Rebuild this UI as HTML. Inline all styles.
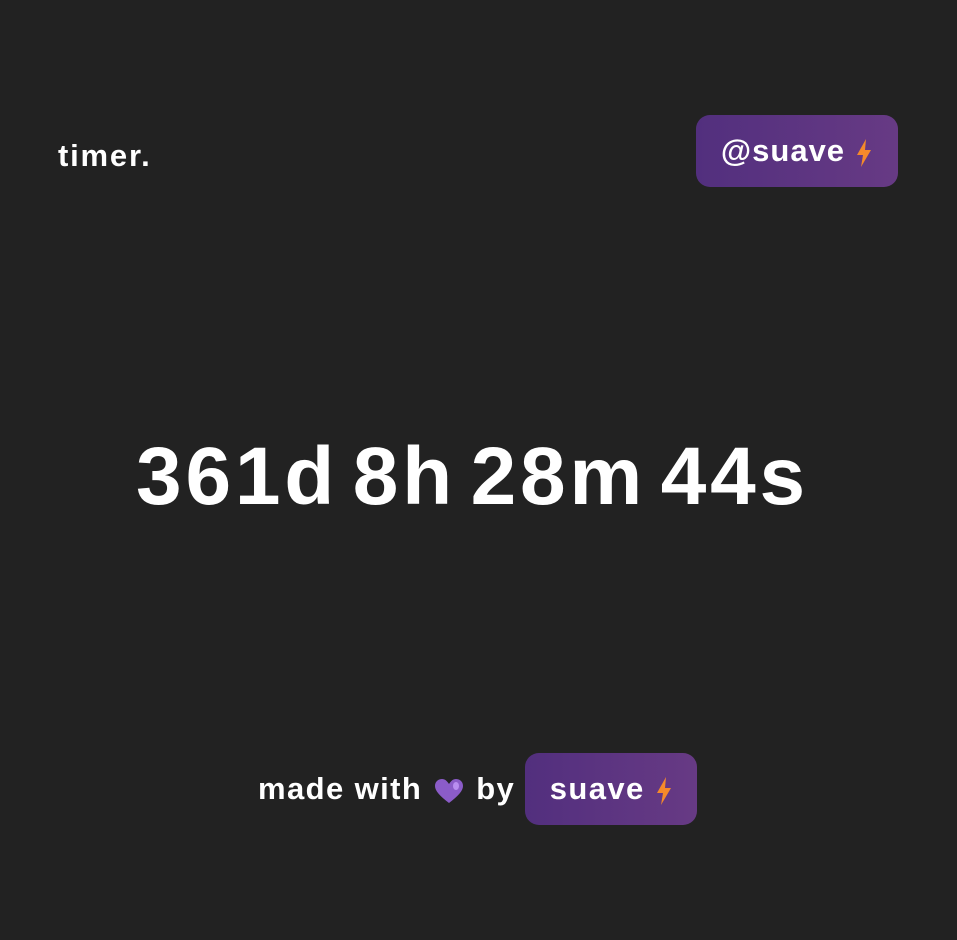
<!DOCTYPE html>
<html><head><style>
html,body{margin:0;padding:0;}
body{width:957px;height:940px;background:#222222;position:relative;overflow:hidden;font-family:"Liberation Sans",sans-serif;color:#fff;font-weight:bold;}
.logo{position:absolute;left:58px;top:138px;font-size:31px;letter-spacing:1.8px;}
.badge{position:absolute;background:linear-gradient(90deg,#522f7e,#673a84);border-radius:14px;display:flex;align-items:center;font-size:31px;}
.b1{left:696px;top:115px;width:202px;height:72px;justify-content:center;letter-spacing:1px;}
.bolt{display:block;margin-left:10px;margin-top:4px;}
.timer{position:absolute;left:-6px;width:957px;top:430px;text-align:center;font-size:82px;letter-spacing:3.8px;word-spacing:-12px;}
.foot{position:absolute;top:753px;left:258px;height:72px;display:flex;align-items:center;font-size:31px;letter-spacing:1.4px;}
.b2{position:relative;width:172px;height:72px;margin-left:10px;justify-content:center;}
.heart{display:block;margin:4px 12px 0 12px;}
</style></head><body>
<div class="logo">timer.</div>
<div class="badge b1">@suave<svg class="bolt" width="18" height="28" viewBox="0 0 18 28"><path d="M11 0 L2 16 H8 L6 28 L16 11 H10 Z" fill="#f58a2a"/></svg></div>
<div class="timer">361d 8h 28m 44s</div>
<div class="foot">made with<svg class="heart" width="30" height="26" viewBox="0 0 30 26"><path d="M15 25 C6 18 1 13 1 8 C1 3 5 1 8 1 C11 1 13 3 15 6 C17 3 19 1 22 1 C25 1 29 3 29 8 C29 13 24 18 15 25Z" fill="#8b5cc8"/><ellipse cx="22" cy="8" rx="3" ry="4" fill="#b98ef0"/></svg>by<div class="badge b2">suave<svg class="bolt" width="18" height="28" viewBox="0 0 18 28"><path d="M11 0 L2 16 H8 L6 28 L16 11 H10 Z" fill="#f58a2a"/></svg></div></div>
</body></html>
